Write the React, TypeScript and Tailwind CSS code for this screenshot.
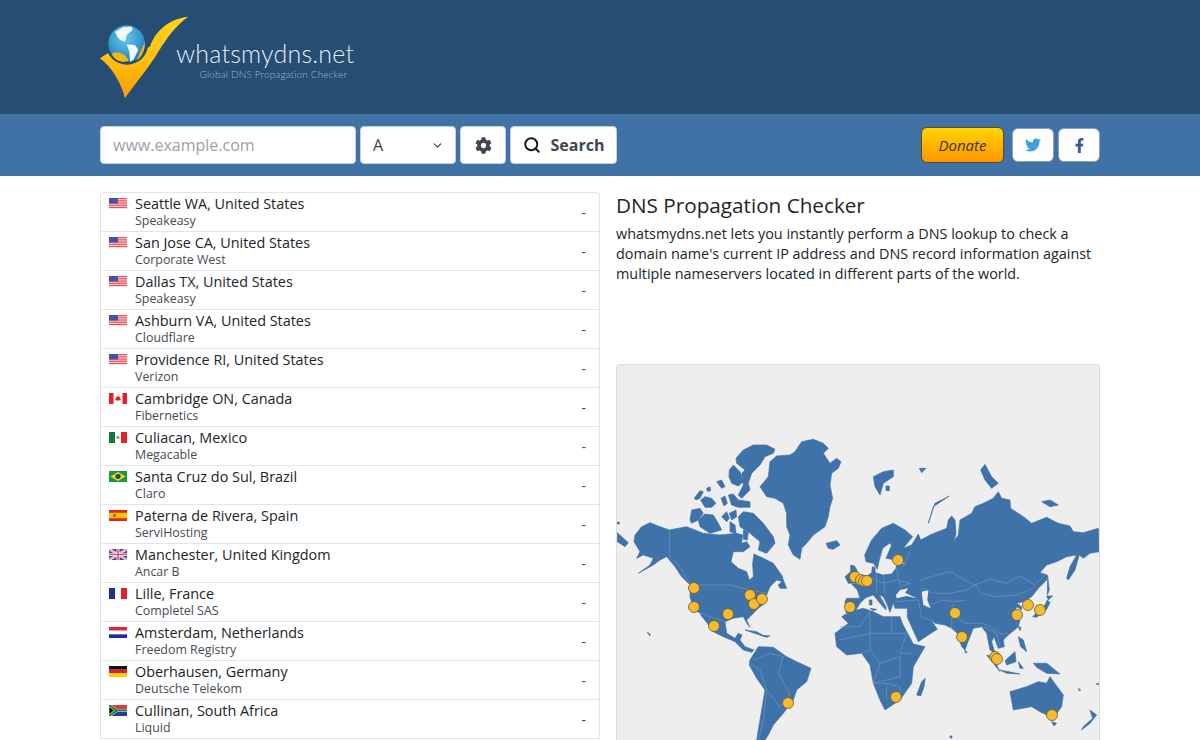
import { ChevronDown, Search } from "lucide-react";
import { FaCog, FaFacebookF, FaTwitter } from "react-icons/fa";

const FONT = "font-['Open_Sans','Noto_Sans',sans-serif]";

type FlagCode = "us" | "ca" | "mx" | "br" | "es" | "gb" | "fr" | "nl" | "de" | "za";

const SERVERS: Array<{ city: string; provider: string; flag: FlagCode }> = [
  { city: "Seattle WA, United States", provider: "Speakeasy", flag: "us" },
  { city: "San Jose CA, United States", provider: "Corporate West", flag: "us" },
  { city: "Dallas TX, United States", provider: "Speakeasy", flag: "us" },
  { city: "Ashburn VA, United States", provider: "Cloudflare", flag: "us" },
  { city: "Providence RI, United States", provider: "Verizon", flag: "us" },
  { city: "Cambridge ON, Canada", provider: "Fibernetics", flag: "ca" },
  { city: "Culiacan, Mexico", provider: "Megacable", flag: "mx" },
  { city: "Santa Cruz do Sul, Brazil", provider: "Claro", flag: "br" },
  { city: "Paterna de Rivera, Spain", provider: "ServiHosting", flag: "es" },
  { city: "Manchester, United Kingdom", provider: "Ancar B", flag: "gb" },
  { city: "Lille, France", provider: "Completel SAS", flag: "fr" },
  { city: "Amsterdam, Netherlands", provider: "Freedom Registry", flag: "nl" },
  { city: "Oberhausen, Germany", provider: "Deutsche Telekom", flag: "de" },
  { city: "Cullinan, South Africa", provider: "Liquid", flag: "za" },
];

const MARKERS = [
  [694, 588], [694, 607], [714, 626], [728, 614], [750, 595], [754, 604], [762, 599],
  [788, 703], [850, 607], [855, 577], [861, 580], [864, 581], [867, 581], [898, 560],
  [955, 613], [962, 637], [995, 657], [997, 659], [1017, 615], [1028, 605], [1040, 610],
  [896, 697], [1052, 715],
];

// land shapes, traced on the left half of the map
const WEST_LAND = [
  "555,95 575,65 610,58 640,70 655,85 640,100 660,130 680,115 693,125 685,145 665,160 660,195 668,235 660,260 655,290 645,320 610,345 590,370 575,385 570,418 550,405 535,375 540,345 530,320 530,280 520,250 495,235 470,230 450,200 475,170 480,125 500,108 540,105",
  "378,115 400,90 430,75 470,75 495,88 490,100 465,110 450,135 425,160 415,190 420,210 395,235 385,225 400,195 395,160 405,150 380,130",
  "358,150 370,135 390,155 400,185 385,198 365,190 357,170",
  "320,185 335,180 345,200 335,205",
  "290,205 300,200 302,212 292,214",
  "253,235 270,212 280,215 270,235 258,240",
  "272,240 285,230 305,235 318,250 305,262 285,262",
  "333,235 345,228 352,250 342,258",
  "355,225 370,222 385,240 420,245 420,262 385,262 365,255",
  "240,300 245,270 270,265 280,280 265,300 245,310",
  "265,300 285,282 310,285 325,310 335,330 300,340 270,320",
  "335,290 350,275 358,295 350,305",
  "358,280 378,270 380,290 365,300",
  "385,290 400,275 430,280 460,310 490,350 495,370 470,400 445,390 450,365 420,340 390,320",
  "360,305 375,315 378,340 360,335",
  "400,330 415,335 412,360 400,358",
  "75,345 95,320 120,308 150,320 178,330 230,320 280,340 330,345 380,340 398,345 395,370 410,365 420,380 400,395 370,395 363,425 385,445 410,455 418,480 430,470 428,430 432,402 460,415 490,430 518,470 520,485 500,480 480,500 470,525 450,525 470,545 445,565 420,590 410,600 420,622 412,612 400,590 370,595 345,605 350,640 375,655 385,640 396,645 390,660 405,680 432,690 425,697 400,690 375,665 340,650 310,635 290,600 270,580 250,565 240,530 240,495 215,470 195,440 170,410 150,420 130,435 85,460 120,435 130,415 100,405 80,415 90,395 72,365",
  "272,585 285,590 305,628 292,610",
  "22,338 55,368 45,380 22,365",
  "505,495 520,480 530,505 510,505",
  "648,370 680,362 690,375 670,388 655,385",
  "405,630 440,635 465,650 440,642",
  "450,645 480,648 470,652",
  "420,720 445,680 490,682 530,710 560,725 603,745 590,785 560,810 550,840 520,880 490,915 475,945 465,960 440,960 450,900 465,810 440,775 418,735",
  "705,470 722,455 722,435 735,440 750,470 745,490 715,490",
  "22,306 28,306 28,312 22,312",
  "112,637 120,642 120,648",
];

// land shapes, traced on the right half of the map
const EAST_LAND = [
  "-12,578 -15,545 -10,535 30,535 22,510 5,492 30,492 55,465 65,458 67,440 75,442 76,458 100,465 125,462 138,445 140,432 172,432 135,420 108,415 125,375 118,370 98,385 88,420 82,448 70,430 48,425 44,405 65,360 95,325 130,310 165,330 188,350 170,372 160,385 185,375 205,342 212,360 240,345 290,325 295,300 305,288 315,300 318,340 312,362 325,345 330,300 365,280 375,260 400,250 430,235 445,215 455,235 480,240 482,265 520,290 545,310 590,292 625,310 660,318 670,335 700,338 745,325 748,395 720,400 700,415 688,405 675,450 655,480 650,475 660,440 680,405 650,410 620,425 590,435 570,458 592,465 590,480 565,505 545,530 520,545 500,550 515,560 515,570 500,560 495,575 510,600 505,620 475,645 460,660 463,680 445,685 432,650 425,665 435,700 420,690 410,640 395,620 370,625 352,670 345,690 335,680 322,640 305,625 285,615 255,610 240,595 262,628 235,645 205,665 172,592 172,565 135,565 130,548 120,577 112,555 100,530 88,525 108,560 108,570 90,550 70,525 55,530 45,535 30,550 15,575",
  "-25,590 0,575 40,565 70,575 100,590 150,590 158,612 190,672 225,680 190,740 185,790 150,840 105,870 90,840 70,790 60,735 35,700 -10,705 -40,680 -45,640 -5,610",
  "200,825 215,785 226,775 222,800 212,828",
  "70,170 100,155 130,150 130,170 100,190 90,225 75,200",
  "108,198 118,198 118,212 108,212",
  "208,145 228,145 215,158",
  "392,150 405,133 425,170 445,190 425,205 405,180",
  "575,245 600,240 625,255 600,260",
  "235,310 250,260 298,228 255,250",
  "593,468 598,510 592,525",
  "590,528 608,528 595,540",
  "548,590 585,555 592,540 600,548 590,568 560,592",
  "505,620 513,622 510,632",
  "505,650 520,660 530,695 512,680",
  "410,705 450,755 440,735 425,710",
  "450,750 510,762 470,760",
  "465,722 495,695 498,725 470,735",
  "505,725 520,745 510,745",
  "550,730 590,730 630,762 590,760 560,742",
  "480,815 530,800 565,785 590,790 600,770 640,825 635,860 610,895 570,875 545,860 490,870",
  "605,905 620,910 612,918",
  "695,930 720,910 740,885 720,870 728,895 700,920",
  "345,690 352,698 345,698",
  "10,435 5,450 12,458 20,450",
  "58,540 66,540 66,555 58,555",
  "60,565 80,568 70,572",
  "300,948 306,948 306,954 300,954",
  "685,805 692,810 688,813",
  "738,792 746,790 746,794",
];

// seas cut out of the land
const EAST_SEA = [
  "138,525 150,510 175,505 165,518 200,535 170,528 140,535",
  "215,515 235,510 232,540 242,565 220,555",
];

const EAST_BORDERS = [
  "210,482 245,470 300,455 345,480 375,495 420,478 470,490 510,468 555,495 585,465",
  "375,495 395,520 440,530 500,525 540,510 555,495",
  "215,505 250,520 300,520 350,510 375,495",
  "240,555 280,540 310,545 350,540",
  "310,550 305,580 345,610 400,610 420,620 450,640 475,640",
  "305,580 305,625",
  "205,540 215,590 240,600",
  "135,545 205,540",
  "80,460 80,520",
  "60,470 100,490 140,480 180,490",
  "100,465 105,520",
  "140,445 150,500 180,490",
  "180,390 160,440",
  "-30,620 30,620 60,575",
  "60,575 60,640 125,640 125,590",
  "125,640 170,640 150,700 190,700",
  "-30,660 60,640",
  "60,640 60,690 35,700",
  "60,690 90,730 150,710",
  "90,730 70,790 150,770 150,710",
  "110,790 150,800 150,840",
  "75,790 110,790 110,840",
  "400,620 440,640 450,680",
];

const WEST_BORDERS = [
  "178,330 178,410 210,440 240,495 360,495 420,510 470,520",
  "272,578 300,590 345,605",
  "430,720 480,700 520,710 505,760 540,820 510,860 470,810 450,750 420,730",
  "470,810 460,900 445,960",
  "680,650 720,620 750,650 690,680",
];

function Flag({ code }: { code: FlagCode }) {
  return (
    <svg viewBox="0 0 18 12" preserveAspectRatio="none" className="h-[11px] w-[18px] shrink-0">
      {code === "us" && (
        <>
          <rect width="18" height="12" fill="#fbe9e9" />
          {[0, 2.4, 4.8, 7.2, 9.6].map((y) => (
            <rect key={y} y={y} width="18" height="1.400" fill="#ea4f55" />
          ))}
          <rect width="9" height="6" fill="#4450ad" />
        </>
      )}
      {code === "ca" && (
        <>
          <rect width="18" height="12" fill="#fff" />
          <rect width="4.500" height="12" fill="#e41e2b" />
          <rect x="13.500" width="4.500" height="12" fill="#e41e2b" />
          <path d="M9 2.500l1 2 1.500-.5-.5 2.500 1-.3-.6 1.600-1.900.2V9H8.500V8l-2-.2L6 6.200l1 .3-.5-2.500 1.500.5z" fill="#e41e2b" />
        </>
      )}
      {code === "mx" && (
        <>
          <rect width="6" height="12" fill="#0f7a3c" />
          <rect x="6" width="6" height="12" fill="#fff" />
          <rect x="12" width="6" height="12" fill="#e5202c" />
          <circle cx="9" cy="6" r="1.400" fill="#8a7a5a" />
        </>
      )}
      {code === "br" && (
        <>
          <rect width="18" height="12" fill="#169b3a" />
          <path d="M9 1.200 16.500 6 9 10.800 1.500 6z" fill="#f7d917" />
          <circle cx="9" cy="6" r="2.600" fill="#1f3f8f" />
        </>
      )}
      {code === "es" && (
        <>
          <rect width="18" height="12" fill="#d9281e" />
          <rect y="3" width="18" height="6" fill="#f8c300" />
          <rect x="4" y="4.500" width="3" height="3" fill="#c0572c" />
        </>
      )}
      {code === "gb" && (
        <>
          <rect width="18" height="12" fill="#3d4ba0" />
          <path d="M0 0l18 12M18 0L0 12" stroke="#fff" strokeWidth="2.400" />
          <path d="M0 0l18 12M18 0L0 12" stroke="#e2627a" strokeWidth="0.800" />
          <path d="M9 0v12M0 6h18" stroke="#fff" strokeWidth="3" />
          <path d="M9 0v12M0 6h18" stroke="#e2526a" strokeWidth="1.600" />
        </>
      )}
      {code === "fr" && (
        <>
          <rect width="6" height="12" fill="#1a2f9c" />
          <rect x="6" width="6" height="12" fill="#fff" />
          <rect x="12" width="6" height="12" fill="#e5202c" />
        </>
      )}
      {code === "nl" && (
        <>
          <rect width="18" height="4" fill="#d8283a" />
          <rect y="4" width="18" height="4" fill="#fff" />
          <rect y="8" width="18" height="4" fill="#1d2f94" />
        </>
      )}
      {code === "de" && (
        <>
          <rect width="18" height="4" fill="#111" />
          <rect y="4" width="18" height="4" fill="#dd1f26" />
          <rect y="8" width="18" height="4" fill="#ffce00" />
        </>
      )}
      {code === "za" && (
        <>
          <rect width="18" height="6" fill="#e03c31" />
          <rect y="6" width="18" height="6" fill="#1f3f9c" />
          <path d="M0 0l8 6h10M8 6l-8 6" fill="none" stroke="#fff" strokeWidth="3" />
          <path d="M0 0l8 6h10M8 6l-8 6" fill="none" stroke="#0f7a4c" strokeWidth="2" />
          <path d="M0 1.800 5.500 6 0 10.200z" fill="#111" stroke="#f7c600" strokeWidth="0.700" />
        </>
      )}
    </svg>
  );
}

function Logo() {
  return (
    <svg viewBox="0 0 300 300" className="ml-[-5px] h-[100px] w-[100px] shrink-0">
      <defs>
        <linearGradient id="check" x1="0" y1="0" x2="0" y2="1">
          <stop offset="0" stopColor="#ffd21a" />
          <stop offset="0.5" stopColor="#ffc20f" />
          <stop offset="1" stopColor="#ff9a00" />
        </linearGradient>
        <radialGradient id="globe" cx="0.45" cy="0.35" r="0.75">
          <stop offset="0" stopColor="#63c8ef" />
          <stop offset="1" stopColor="#1478b6" />
        </radialGradient>
      </defs>
      <path
        d="M15 160 45 140 100 150 165 125C178 85 215 42 280 35 240 62 212 105 190 140 160 190 120 235 90 280 80 240 55 190 15 160Z"
        fill="url(#check)"
      />
      <circle cx="96" cy="115" r="64" fill="#264d73" />
      <circle cx="95" cy="116" r="55" fill="url(#globe)" />
      <path d="M60 80 85 66 110 65 113 75 95 90 90 110 75 105 65 92ZM95 118 120 120 130 135 115 165 105 170 103 140Z" fill="#f2f8fb" />
      <path d="M50 146C62 138 90 142 101 166 88 175 60 170 50 146ZM124 166C134 150 140 130 150 110 150 135 142 155 124 166Z" fill="#f9b511" />
    </svg>
  );
}

export default function App() {
  return (
    <div className={`h-[740px] overflow-hidden bg-white text-[#212529] ${FONT}`}>
      <header className="h-[114px] bg-[#264d73]">
        <div className="mx-auto flex w-[1000px] items-start pt-[5px]">
          <Logo />
          <div className="mt-[37px] ml-[-19px] flex flex-col items-end">
            <div className="font-['Lato',sans-serif] text-[25px] leading-[22px] font-light tracking-[0.2px] text-[#e3ecf3]">
              whatsmydns.net
            </div>
            <div className="mt-[3px] mr-[7px] font-['Lato',sans-serif] text-[10px] leading-[14px] font-light tracking-[0.15px] text-[#a3b8cc]">
              Global DNS Propagation Checker
            </div>
          </div>
        </div>
      </header>

      <div className="h-[62px] bg-[#4072a6]">
        <div className="mx-auto flex h-full w-[1000px] items-center gap-1">
          <div className="flex h-[38px] w-[256px] items-center rounded-[4px] border border-[#c3cfdc] bg-white pl-[12px] text-[16px] text-[#9aa2aa]">
            www.example.com
          </div>
          <div className="flex h-[38px] w-[96px] items-center justify-between rounded-[4px] border border-[#c3cfdc] bg-white pr-[11px] pl-[12px] text-[16px] text-[#3a4250]">
            A
            <ChevronDown size={13} strokeWidth={2.5} className="text-[#3f4a5a]" />
          </div>
          <div className="flex h-[38px] w-[46px] items-center justify-center rounded-[4px] border border-[#c3cfdc] bg-white text-[#3f4654]">
            <FaCog size={17} />
          </div>
          <div className="flex h-[38px] w-[107px] items-center justify-center gap-[10px] rounded-[4px] border border-[#c3cfdc] bg-white text-[16px] font-bold text-[#3f4654]">
            <Search size={18} strokeWidth={2.6} className="text-[#14171c]" />
            Search
          </div>
          <div className="ml-auto flex h-[36px] w-[83px] items-center justify-center rounded-[6px] border border-[#5b4a20] bg-gradient-to-b from-[#ffd500] to-[#ff9500] text-[15px] text-[#3d3318] italic">
            Donate
          </div>
          <div className="ml-[4px] flex h-[34px] w-[42px] items-center justify-center rounded-[6px] border border-[#8ca3bd] bg-white text-[#3fa1de]">
            <FaTwitter size={16} />
          </div>
          <div className="flex h-[34px] w-[42px] items-center justify-center rounded-[6px] border border-[#8ca3bd] bg-white text-[#3f5a98]">
            <FaFacebookF size={15} />
          </div>
        </div>
      </div>

      <main className="mx-auto flex w-[1000px] items-start gap-4 pt-4">
        <div className="w-[500px] shrink-0 overflow-hidden rounded-t-[4px] border border-b-0 border-[#e2e5e8]">
          {SERVERS.map((server) => (
            <div key={server.city} className="flex h-[39px] items-start border-b border-[#e2e5e8] pl-2">
              <div className="mt-[5px]">
                <Flag code={server.flag} />
              </div>
              <div className="ml-2 min-w-0 flex-1 pt-[1px]">
                <div className="text-[14.4px] leading-[19px]">{server.city}</div>
                <div className="text-[12.4px] leading-[16px] text-[#454c54]">{server.provider}</div>
              </div>
              <div className="mt-[9px] mr-[13px] text-[14px] text-[#454c54]">-</div>
            </div>
          ))}
        </div>

        <div className="w-[484px] shrink-0">
          <h1 className="h-[28px] text-[20.7px] leading-[26px] font-normal text-[#212529]">DNS Propagation Checker</h1>
          <p className="mt-[4px] h-[140px] text-[14.4px] leading-[20px]">
            whatsmydns.net lets you instantly perform a DNS lookup to check a domain name's current IP address and DNS
            record information against multiple nameservers located in different parts of the world.
          </p>
          <div className="h-[420px] overflow-hidden rounded-[4px] border border-[#dcdcdc] bg-[#eeeeee]">
            <svg viewBox="617 365 482 418" className="block h-[418px] w-[482px]">
              <g transform="translate(610 420) scale(0.3333)">
                {WEST_LAND.map((points) => (
                  <polygon key={points} points={points} fill="#3f72a8" stroke="#3f72a8" strokeWidth="2" strokeLinejoin="round" />
                ))}
                {WEST_BORDERS.map((points) => (
                  <polyline key={points} points={points} fill="none" stroke="#7d9fc4" strokeWidth="1.600" />
                ))}
              </g>
              <g transform="translate(850 420) scale(0.3333)">
                {EAST_LAND.map((points) => (
                  <polygon key={points} points={points} fill="#3f72a8" stroke="#3f72a8" strokeWidth="2" strokeLinejoin="round" />
                ))}
                {EAST_SEA.map((points) => (
                  <polygon key={points} points={points} fill="#eeeeee" />
                ))}
                {EAST_BORDERS.map((points) => (
                  <polyline key={points} points={points} fill="none" stroke="#7d9fc4" strokeWidth="1.600" />
                ))}
              </g>
              {MARKERS.map(([x, y]) => (
                <circle key={`${x}-${y}`} cx={x} cy={y} r="5.500" fill="#f6bb2f" stroke="#6f5a2c" strokeWidth="0.800" />
              ))}
            </svg>
          </div>
        </div>
      </main>
    </div>
  );
}
